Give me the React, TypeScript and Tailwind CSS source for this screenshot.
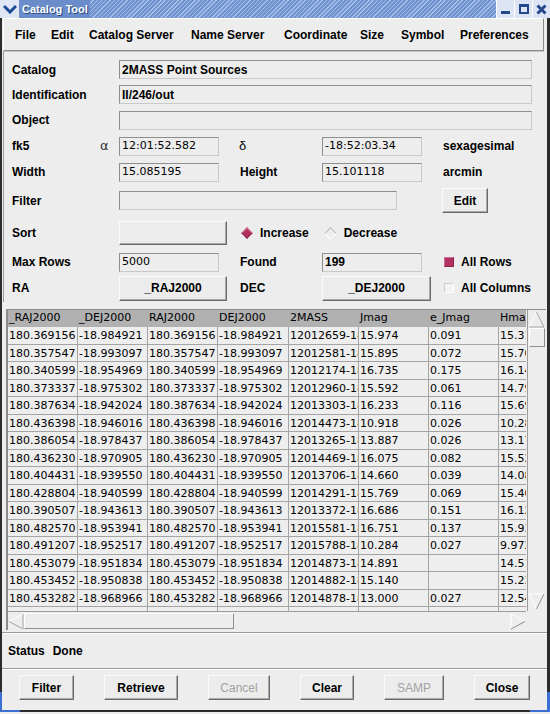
import React from "react"

const ROWS: string[][] = [
  ["180.369156", "-18.984921", "12012659-1859053", "15.974", "0.091", "15.312"],
  ["180.357547", "-18.993097", "12012581-1859351", "15.895", "0.072", "15.705"],
  ["180.340599", "-18.954969", "12012174-1857178", "16.735", "0.175", "16.148"],
  ["180.373337", "-18.975302", "12012960-1858310", "15.592", "0.061", "14.796"],
  ["180.387634", "-18.942024", "12013303-1856312", "16.233", "0.116", "15.694"],
  ["180.436398", "-18.946016", "12014473-1856456", "10.918", "0.026", "10.281"],
  ["180.386054", "-18.978437", "12013265-1858423", "13.887", "0.026", "13.176"],
  ["180.436230", "-18.970905", "12014469-1858152", "16.075", "0.082", "15.526"],
  ["180.404431", "-18.939550", "12013706-1856224", "14.660", "0.039", "14.083"],
  ["180.428804", "-18.940599", "12014291-1856261", "15.769", "0.069", "15.401"],
  ["180.390507", "-18.943613", "12013372-1856370", "16.686", "0.151", "16.127"],
  ["180.482570", "-18.953941", "12015581-1857141", "16.751", "0.137", "15.936"],
  ["180.491207", "-18.952517", "12015788-1857090", "10.284", "0.027", "9.972"],
  ["180.453079", "-18.951834", "12014873-1857066", "14.891", "", "14.512"],
  ["180.453452", "-18.950838", "12014882-1857030", "15.140", "", "15.233"],
  ["180.453282", "-18.968966", "12014878-1858082", "13.000", "0.027", "12.544"],
  ["180.441702", "-18.961120", "12014600-1857400", "15.210", "0.055", "14.801"],
]

const HEADERS = ["_RAJ2000", "_DEJ2000", "RAJ2000", "DEJ2000", "2MASS", "Jmag", "e_Jmag", "Hmag"]
const COL_W = ["w-[70px]", "w-[70px]", "w-[70px]", "w-[71px]", "w-[70px]", "w-[70px]", "w-[70px]", "w-[70px]"]

const MENU: [string, string][] = [
  ["File", "w-[36px]"],
  ["Edit", "w-[38px]"],
  ["Catalog Server", "w-[102px]"],
  ["Name Server", "w-[93px]"],
  ["Coordinate", "w-[76px]"],
  ["Size", "w-[41px]"],
  ["Symbol", "w-[59px]"],
  ["Preferences", "w-[80px]"],
]

const label = "font-bold text-[12px] text-black"
const field =
  "h-[19px] border border-[#8e8e8e] border-b-[#c9c9c9] border-r-[#c9c9c9] bg-[#ededed] flex items-center px-[2px] overflow-hidden whitespace-nowrap"
const raised =
  "border border-[#fafafa] border-b-[#6a6a6a] border-r-[#6a6a6a] shadow-[inset_-1px_-1px_0_#a9a9a9] bg-[#ececec] flex items-center justify-center"
const data = "font-['DejaVu_Sans',sans-serif] text-[11px] text-black"

function Button({ text, w, disabled }: { text: string; w: string; disabled?: boolean }) {
  return (
    <div className={`${raised} ${w} h-[25px] ${label}`}>
      <span className={disabled ? "text-[#a2a2a2] font-normal" : ""}>{text}</span>
    </div>
  )
}

function Diamond({ on }: { on?: boolean }) {
  return on ? (
    <div className="w-[8px] h-[8px] rotate-45 bg-[#b23162] border border-[#d26f94] border-b-[#8c2249] border-r-[#8c2249]" />
  ) : (
    <div className="w-[9px] h-[9px] rotate-45 border border-[#b9b9b9] border-b-white border-r-white" />
  )
}

export default function App() {
  return (
    <div className="w-[550px] h-[714px] bg-[#ededed] flex flex-col overflow-hidden font-['Liberation_Sans',Arial,sans-serif] relative">
      {/* title bar */}
      <div className="h-[18px] flex shrink-0">
        <div className="w-[20px] bg-[#dfe7f5] flex items-center justify-center border-r border-[#6f8fcb]">
          <svg width="14" height="10" viewBox="0 0 14 10">
            <path d="M1 2 L7 8 L13 2" stroke="#1d4a96" strokeWidth="3" fill="none" />
          </svg>
        </div>
        <div className="bg-[#6a8cca] px-[2px] flex items-center text-white font-bold text-[11px] [text-shadow:1px_1px_0_#2b4a80]">
          Catalog Tool
        </div>
        <div className="flex-1 bg-[repeating-linear-gradient(135deg,#7193d0_0px,#7193d0_2px,#a6bde6_2px,#a6bde6_3px)]" />
        <div className="w-[18px] bg-[#dde5f4] border-l border-white flex items-end justify-center pb-[4px]">
          <div className="w-[9px] h-[3px] bg-[#24488c]" />
        </div>
        <div className="w-[18px] bg-[#dde5f4] border-l border-white flex items-center justify-center">
          <div className="w-[10px] h-[10px] border-2 border-t-[3px] border-[#24488c]" />
        </div>
        <div className="w-[18px] bg-[#dde5f4] border-l border-white flex items-center justify-center">
          <svg width="11" height="11" viewBox="0 0 11 11">
            <path d="M1.5 1.5 L9.5 9.5 M9.5 1.5 L1.5 9.5" stroke="#24488c" strokeWidth="3" />
          </svg>
        </div>
      </div>

      {/* body */}
      <div className="flex-1 flex flex-col border-l-2 border-r-[3px] border-b-2 border-[#2c2c2c] mb-[2px]">
        {/* menu bar */}
        <div className="ml-[1px] mr-[3px] h-[33px] shrink-0 border border-white border-b-[#8a8a8a] border-r-[#8a8a8a] shadow-[0_1px_0_#c4c4c4] flex items-center pl-[11px] text-[12px] font-bold">
          {MENU.map(([m, w]) => (
            <span key={m} className={`${w} shrink-0 whitespace-nowrap`}>
              {m}
            </span>
          ))}
        </div>

        {/* form */}
        <div className="flex flex-col pt-[6px] pl-[8px] border-l border-[#9a9a9a] ml-[1px]">
          <div className="h-[25px] flex items-center">
            <div className={`${label} w-[107px]`}>Catalog</div>
            <div className={`${field} w-[413px] ${label}`}>2MASS Point Sources</div>
          </div>
          <div className="h-[25px] flex items-center">
            <div className={`${label} w-[107px]`}>Identification</div>
            <div className={`${field} w-[413px] ${label}`}>II/246/out</div>
          </div>
          <div className="h-[26px] flex items-center">
            <div className={`${label} w-[107px]`}>Object</div>
            <div className={`${field} w-[413px]`} />
          </div>
          <div className="h-[26px] flex items-center">
            <div className={`${label} w-[88px]`}>fk5</div>
            <div className="w-[19px] text-[13px] font-['DejaVu_Sans',sans-serif] text-[#333]">α</div>
            <div className={`${field} w-[100px] ${data}`}>12:01:52.582</div>
            <div className={`${label} w-[103px] pl-[20px] font-normal text-[13px]`}>δ</div>
            <div className={`${field} w-[100px] ${data}`}>-18:52:03.34</div>
            <div className={`${label} pl-[21px]`}>sexagesimal</div>
          </div>
          <div className="h-[26px] flex items-center">
            <div className={`${label} w-[107px]`}>Width</div>
            <div className={`${field} w-[100px] ${data}`}>15.085195</div>
            <div className={`${label} w-[103px] pl-[21px]`}>Height</div>
            <div className={`${field} w-[100px] ${data}`}>15.101118</div>
            <div className={`${label} pl-[21px]`}>arcmin</div>
          </div>
          <div className="h-[31px] flex items-center">
            <div className={`${label} w-[107px]`}>Filter</div>
            <div className={`${field} w-[278px]`} />
            <div className="w-[45px]" />
            <Button text="Edit" w="w-[46px]" />
          </div>
          <div className="h-[34px] flex items-center">
            <div className={`${label} w-[107px]`}>Sort</div>
            <div className={`${raised} w-[108px] h-[24px]`} />
            <div className="w-[16px]" />
            <Diamond on />
            <span className={`${label} ml-[9px]`}>Increase</span>
            <div className="w-[17px]" />
            <Diamond />
            <span className={`${label} ml-[9px]`}>Decrease</span>
          </div>
          <div className="h-[24px] flex items-center">
            <div className={`${label} w-[107px]`}>Max Rows</div>
            <div className={`${field} w-[100px] ${data}`}>5000</div>
            <div className={`${label} w-[103px] pl-[21px]`}>Found</div>
            <div className={`${field} w-[100px] ${label}`}>199</div>
            <div className="w-[22px]" />
            <div className="w-[10px] h-[10px] bg-[#b23162] border border-[#8c2249] border-t-[#d06a90] border-l-[#d06a90]" />
            <span className={`${label} ml-[7px]`}>All Rows</span>
          </div>
          <div className="h-[28px] flex items-center">
            <div className={`${label} w-[107px]`}>RA</div>
            <Button text="_RAJ2000" w="w-[108px]" />
            <div className={`${label} w-[95px] pl-[13px]`}>DEC</div>
            <Button text="_DEJ2000" w="w-[109px]" />
            <div className="w-[13px]" />
            <div className="w-[10px] h-[10px] bg-[#f3f3f3] border border-[#d0d0d0] border-b-white border-r-white" />
            <span className={`${label} ml-[7px]`}>All Columns</span>
          </div>
        </div>

        {/* table */}
        <div className="ml-[4px] mr-[1px] mt-[7px] border-l-2 border-t border-[#8c8c8c] flex flex-col">
          <div className="flex">
            <div className="w-[518px] h-[301px] overflow-hidden flex flex-col">
              <div className="flex h-[17px] shrink-0 bg-[#b1b1b1]">
                {HEADERS.map((h, i) => (
                  <div key={h} className={`${COL_W[i]} shrink-0 pl-[1px] ${data} text-[#f7f7f7] leading-[16px] whitespace-nowrap overflow-hidden`}>
                    {h}
                  </div>
                ))}
              </div>
              {ROWS.map((r, ri) => {
                const cells = [r[0], r[1], r[0], r[1], r[2], r[3], r[4], r[5]]
                const tall = ri % 2 === 0
                return (
                  <div key={ri} className={`flex shrink-0 bg-[#eeeeee] ${tall ? "h-[18px]" : "h-[17px]"}`}>
                    {cells.map((c, ci) => (
                      <div
                        key={ci}
                        className={`${COL_W[ci]} shrink-0 pl-[1px] border-r border-b border-[#a4a4a4] ${data} whitespace-nowrap overflow-hidden ${
                          tall ? "leading-[18px]" : "leading-[17px]"
                        }`}
                      >
                        {c}
                      </div>
                    ))}
                  </div>
                )
              })}
            </div>
            {/* vertical scrollbar */}
            <div className="w-[19px] h-[301px] ml-[1px] border-l border-[#9c9c9c] bg-[#ededed] flex flex-col">
              <svg width="17" height="18" viewBox="0 0 17 18">
                <path d="M1 17 L8.5 2" stroke="#ffffff" strokeWidth="1" fill="none" />
                <path d="M8.5 2 L16 17 L1 17" stroke="#a8a8a8" strokeWidth="1" fill="none" />
              </svg>
              <div className="mx-[1px] h-[19px] border border-white border-b-[#8e8e8e] border-r-[#8e8e8e]" />
              <div className="flex-1" />
              <svg width="17" height="18" viewBox="0 0 17 18">
                <path d="M1 1 L16 1" stroke="#ffffff" strokeWidth="1" fill="none" />
                <path d="M1 1 L8.5 16" stroke="#ffffff" strokeWidth="1" fill="none" />
                <path d="M16 1 L8.5 16" stroke="#8e8e8e" strokeWidth="1" fill="none" />
              </svg>
            </div>
          </div>
          {/* horizontal scrollbar */}
          <div className="flex h-[19px]">
            <div className="w-[518px] border-t border-[#9c9c9c] flex items-center bg-[#ededed]">
              <svg width="16" height="17" viewBox="0 0 16 17">
                <path d="M15 1 L1 8.5" stroke="#ffffff" strokeWidth="1" fill="none" />
                <path d="M1 8.5 L15 16 L15 1" stroke="#a8a8a8" strokeWidth="1" fill="none" />
              </svg>
              <div className="w-[210px] h-[16px] border border-white border-b-[#8e8e8e] border-r-[#8e8e8e]" />
              <div className="flex-1" />
              <svg width="16" height="17" viewBox="0 0 16 17">
                <path d="M1 1 L15 8.5" stroke="#ffffff" strokeWidth="1" fill="none" />
                <path d="M1 1 L1 16" stroke="#ffffff" strokeWidth="1" fill="none" />
                <path d="M15 8.5 L1 16" stroke="#8e8e8e" strokeWidth="1" fill="none" />
              </svg>
            </div>
            <div className="flex-1" />
          </div>
        </div>

        {/* status */}
        <div className="mt-[2px] border-t border-[#9a9a9a] shadow-[inset_0_1px_0_#ffffff] h-[36px] flex items-center pl-[6px] gap-[8px]">
          <span className={label}>Status</span>
          <span className={label}>Done</span>
        </div>

        {/* buttons */}
        <div className="border-t border-[#9a9a9a] shadow-[inset_0_1px_0_#ffffff] flex pt-[6px] pl-[17px] gap-[30px]">
          <Button text="Filter" w="w-[55px]" />
          <Button text="Retrieve" w="w-[74px]" />
          <Button text="Cancel" w="w-[62px]" disabled />
          <Button text="Clear" w="w-[54px]" />
          <Button text="SAMP" w="w-[60px]" disabled />
          <Button text="Close" w="w-[56px]" />
        </div>
      </div>

      {/* resize corners */}
      <div className="absolute left-0 bottom-[2px] w-[2px] h-[20px] bg-[#3d6fd0]" />
      <div className="absolute left-0 bottom-[2px] w-[20px] h-[2px] bg-[#3d6fd0]" />
      <div className="absolute right-0 bottom-[2px] w-[3px] h-[20px] bg-[#3d6fd0]" />
      <div className="absolute right-0 bottom-[2px] w-[20px] h-[2px] bg-[#3d6fd0]" />
    </div>
  )
}
